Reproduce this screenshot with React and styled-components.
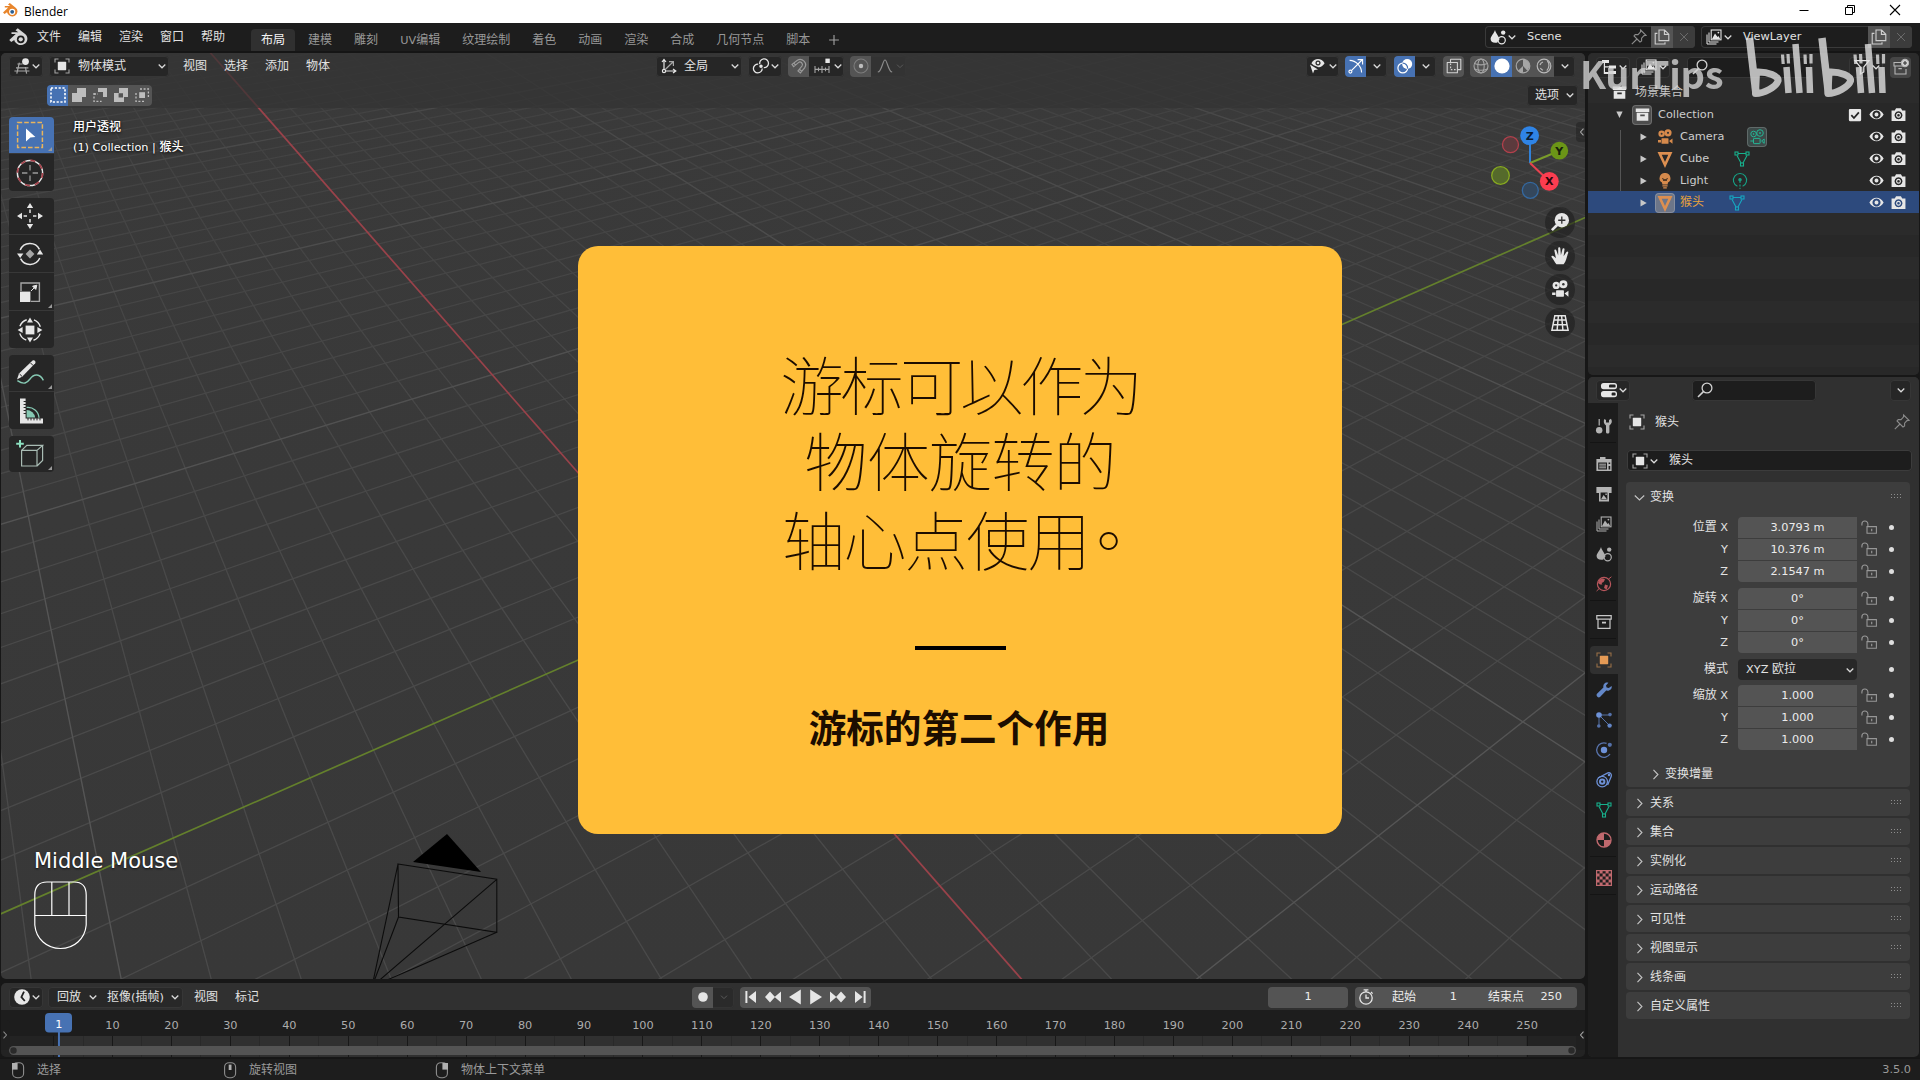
import React from "react";
import styled, { createGlobalStyle, css } from "styled-components";

const Global = createGlobalStyle`
  * { box-sizing: border-box; }
  body { margin: 0; background: #161616; overflow: hidden; }
`;

/* ---------- text ---------- */

const Cjk = styled.span`
  font-size: 12px;
`;
const T = ({ children }) =>
  String(children)
    .split(/([\u3000-\u9fff]+)/)
    .filter(Boolean)
    .map((part, i) => (/[\u3000-\u9fff]/.test(part) ? <Cjk key={i}>{part}</Cjk> : part));

const Label = styled.span`
  color: ${(p) => p.$color || "#e2e2e2"};
  white-space: pre;
  line-height: 18px;
  flex: none;
  ${(p) => p.$ml !== undefined && `margin-left: ${p.$ml}px;`}
  ${(p) => p.$w && `width: ${p.$w}px;`}
  ${(p) => p.$align && `text-align: ${p.$align};`}
  ${(p) => p.$shadow && "font-weight: 500; text-shadow: 0 1px 3px #000;"}
`;

/* ---------- icons ---------- */

const W = "#e6e6e6";
const G = "#a6a6a6";
const line = (c = W, w = 1.2) => ({ fill: "none", stroke: c, strokeWidth: w });

const movie = (c) => (
  <g fill={c}>
    <circle cx="4.6" cy="4.8" r="3.2" />
    <circle cx="11" cy="3.8" r="3.6" />
    <rect x="4.5" y="9.2" width="7" height="5.6" rx=".6" />
    <path d="M12 12 L15.5 9.6 V14.8 Z M1 11 H4 V13.4 H1Z" />
    <circle cx="4.6" cy="4.8" r="1" fill="#333" />
    <circle cx="11" cy="3.8" r="1.1" fill="#333" />
  </g>
);
const meshData = (c) => (
  <g {...line(c, 1.1)}>
    <path d="M4 2.5 H12 M3 4.5 L7 12 M13 4.5 L9 12" />
    <rect x="1" y="1" width="3" height="3" />
    <rect x="12" y="1" width="3" height="3" />
    <rect x="6.5" y="12" width="3" height="3" />
  </g>
);
const objectFrame = (c, f) => (
  <g>
    <path {...line(f, 1.1)} d="M1 4.5V1H4.5 M11.5 1H15V4.5 M15 11.5V15H11.5 M4.5 15H1V11.5" />
    <rect x="3.8" y="3.8" width="8.4" height="8.4" rx=".6" fill={c} />
  </g>
);
const layers = (c) => (
  <g>
    <path {...line(c, 1)} d="M1 5.5V15H10.5 M3 3.5V13H12.5" />
    <rect {...line(c, 1.1)} x="5.2" y="1" width="9.8" height="9.8" />
    <path fill={c} d="M6 10 L9 4.5 L11.5 8 L12.5 7 L14.2 10Z" />
    <circle cx="12.4" cy="3.6" r=".9" fill={c} />
  </g>
);
const sceneIcon = (c) => (
  <g>
    <path fill={c} d="M5 1 C6 5 9.5 8 9.5 10.5 A4 4 0 0 0 7.5 13.6 C3 14.6 .6 12.6 .6 10 C.6 7.4 4 4.5 5 1Z" />
    <circle cx="13.2" cy="3.6" r="2.2" fill={c} />
    <circle cx="11.7" cy="11.3" r="3.6" {...line(c, 1.2)} />
  </g>
);
const archive = (c) => (
  <g>
    <path fill={c} d="M.8 1.5 H15.2 V5.2 H.8Z" />
    <path fill={c} fillRule="evenodd" d="M1.8 6 H14.2 V14.6 H1.8Z M5.6 8 V9.8 H10.4 V8Z" />
  </g>
);
const pin = (c) => (
  <path {...line(c, 1.1)} d="M9.6 1 L15 6.4 L13 6.6 L10.6 9.2 L10.6 12 L9 13 L3 7 L4.2 5.6 L7 5.6 L9.4 3Z M6 10 L.8 15.2" />
);

const logoBody = "M6.2 5.6 L1 10.4 L2.6 12 L5 10.3 A5.3 5 0 1 0 13.4 5.4 L7.8 1 L6 2.6 L8.2 4.1 L2.8 4.1 L2.8 5.6Z";

const icons = {
  down: <path {...line("#d6d6d6", 1.7)} d="M3.6 6 L8 10.4 L12.4 6" />,
  downDim: <path {...line("#5a5a5a", 1.3)} d="M4 6.2 L8 10.2 L12 6.2" />,
  right: <path {...line("#c4c4c4", 1.4)} d="M5.5 2.2 L11 8 L5.5 13.8" />,
  open: <path {...line("#c4c4c4", 1.4)} d="M2.2 5.5 L8 11 L13.8 5.5" />,
  left: <path {...line("#a8a8a8", 1.4)} d="M10 3.5 L6 8 L10 12.5" />,
  rightDim: <path {...line("#8a8a8a", 1.4)} d="M6 3.5 L10 8 L6 12.5" />,
  logo: (
    <g>
      <path fill="#d6d6d6" d={logoBody} />
      <circle cx="10.2" cy="9.8" r="3.1" fill="#1d1d1d" />
      <circle cx="10.2" cy="9.8" r="1.7" fill="#d6d6d6" />
    </g>
  ),
  logoColor: (
    <g>
      <path fill="#e8852b" d={logoBody} />
      <circle cx="10.2" cy="9.8" r="3.1" fill="#fff" />
      <circle cx="10.2" cy="9.8" r="1.9" fill="#2b5f92" />
    </g>
  ),
  min: <path {...line("#000", 1)} d="M3.5 8.5H12.5" />,
  restore: <path {...line("#000", 1)} d="M3.5 5.5H10.5V12.5H3.5Z M5.5 5.5V3.5H12.5V10.5H10.5" />,
  close: <path {...line("#000", 1.1)} d="M3 3 L13 13 M13 3 L3 13" />,
  x: <path {...line("#6c6c6c", 1.1)} d="M3.5 3.5 L12.5 12.5 M12.5 3.5 L3.5 12.5" />,
  plus: <path {...line("#a0a0a0", 1.3)} d="M8 2.4V13.6 M2.4 8H13.6" />,
  editor3d: (
    <g>
      <path {...line(G, 1.2)} d="M3.4 6H8.6 M2 9.8H14.4 M.4 13H15.4 M5.4 4.6 L2.8 15.6 M11.4 9 L12.6 15.6" />
      <circle cx="11.5" cy="3.6" r="3.4" fill={W} />
    </g>
  ),
  object: objectFrame(W, G),
  objectOrange: objectFrame("#e49a55", "#9a7048"),
  orient: (
    <g {...line(W, 1.2)}>
      <path d="M3 12 V1.5 M1 4 L3 1.4 L5 4 M4.5 13 H14.5 M12 11 L14.8 13 L12 15" />
      <path stroke={G} d="M4.5 11.3 L12 4 M8 3.6H12.4V8" />
      <circle cx="3" cy="13" r="1.6" />
    </g>
  ),
  pivot: (
    <g {...line(W, 1.3)}>
      <path d="M9.2 10.4 A4.4 4.4 0 1 1 5.2 6.1" />
      <path d="M6.8 6.200 A4.400 4.400 0 1 1 10.800 9.700" />
      <circle cx="8" cy="8.2" r="1.1" fill={W} />
    </g>
  ),
  magnet: (
    <path {...line("#9a9a9a", 1.2)} d="M1 6.4 L6.4 2.2 C11 -.6 17 5 13.6 9.8 L9.4 15 L7 13 L11 8 C12.6 5.6 9.6 2.8 7.4 4.6 L2.6 8.6Z M2.8 5.2 L4.6 7.2 M8.4 11.2 L10.8 13.2" />
  ),
  snap: (
    <g>
      <path {...line(G, 1.1)} d="M1 11.4H15 M1 8V15 M4.5 9.6V13.2 M8 8V15 M11.5 9.6V13.2 M15 8V15" />
      <rect x="11.4" y=".6" width="4.4" height="4.4" fill={W} />
    </g>
  ),
  prop: (
    <g>
      <circle cx="8" cy="8" r="7" {...line("#7c7c7c", 1.1)} />
      <circle cx="8" cy="8" r="2.2" fill="#bdbdbd" />
    </g>
  ),
  curve: <path {...line("#8a8a8a", 1.2)} d="M.8 14 C5 13.6 5.6 2 8 2 C10.4 2 11 13.6 15.2 14" />,
  visibility: (
    <g>
      <path fill={W} d="M1 6.4 L9 11.4 L5.4 12 L4 15.4Z" />
      <path fill={W} fillRule="evenodd" d="M2.4 5.2 C5.6 -.4 12.4 -.4 15.6 5.2 C13.8 8 11.4 9.4 9.6 9.2 L4.6 7.2Z M9 2.4 A2.6 2.6 0 1 0 9.01 2.4Z" />
      <circle cx="9" cy="5" r="1.3" fill={W} />
    </g>
  ),
  gizmo: (
    <g {...line("#fff", 1.1)}>
      <path d="M3.4 12.6 L14 2 M9.6 1.6H14.6V6.4 M1.6 2.4 C8 2.6 13.4 8 13.6 14.4" />
      <circle cx="2.4" cy="13.6" r="1.5" />
    </g>
  ),
  overlay: (
    <g>
      <circle cx="10.2" cy="6" r="5" fill="#fff" />
      <circle cx="5.8" cy="10" r="4.9" {...line("#fff", 1.2)} />
      <path {...line("#4772b3", 1.2)} d="M5.6 5.2 A4.9 4.9 0 0 1 10.6 10.6" />
    </g>
  ),
  xray: (
    <g {...line("#d2d2d2", 1.1)} strokeLinejoin="round">
      <path d="M4.5 1.2H14.8V11.6H11.4 M4.5 1.2V4.5 M1.2 4.5H11.4V14.8H1.2Z" />
      <path strokeDasharray="1.6 1.6" d="M4.6 5.4V11.6H11" />
    </g>
  ),
  wire: (
    <g {...line(G, 1.1)}>
      <circle cx="8" cy="8" r="7" />
      <ellipse cx="8" cy="8" rx="3.2" ry="7" />
      <path d="M1.4 5.6 C5 7 11 7 14.6 5.6 M1.4 11 C5 12.4 11 12.4 14.6 11" />
    </g>
  ),
  solid: <circle cx="8" cy="8" r="7.6" fill="#fff" />,
  material: (
    <g>
      <circle cx="8" cy="8" r="6.8" {...line(G, 1.2)} />
      <path fill={G} d="M8 8V1.2A6.8 6.8 0 0 1 14.8 8L12.4 12.800Z M8 8L3 12.800A6.800 6.800 0 0 0 8 14.800Z" />
    </g>
  ),
  rendered: (
    <g {...line("#b8b8b8", 1.2)}>
      <circle cx="8" cy="8" r="6.8" />
      <path d="M11.4 3 C13.6 5.4 13.6 9.6 10.8 12.6 M4.4 10 A4.4 4.4 0 0 0 7 12.2 M4 7 A4 4 0 0 1 7 4" />
    </g>
  ),
  selSet: <rect x="1" y="1" width="14" height="14" fill="none" stroke="#fff" strokeWidth="1.6" strokeDasharray="2.2 1.6" />,
  selAdd: <path fill="#bdbdbd" d="M6 1H15V10H11V15H1V6H6Z" />,
  selSub: (
    <g>
      <path fill="#bdbdbd" d="M6 1H15V10H11V5H6Z" />
      <path {...line("#bdbdbd", 1.3)} strokeDasharray="2 1.6" d="M2 6V14.4H9.6 M2 7H6" />
    </g>
  ),
  selDiff: <path fill="#bdbdbd" fillRule="evenodd" d="M6 1H15V10H11V15H1V6H6Z M5.6 6.2V10.4H10V6.2Z" />,
  selAnd: (
    <g>
      <rect x="5.2" y="5.2" width="5.8" height="5.8" fill="#bdbdbd" />
      <path {...line("#bdbdbd", 1.3)} strokeDasharray="2 1.6" d="M6 2H14.4V10 M2 6V14.4H10" />
    </g>
  ),
  scene: sceneIcon(W),
  sceneDim: sceneIcon("#b0b0b0"),
  layers: layers(W),
  layersDim: layers("#b0b0b0"),
  pin: pin("#8a8a8a"),
  copy: (
    <g {...line("#cfcfcf", 1.1)}>
      <path d="M5 1H10.6L14.8 5.2V11.6H5Z M10.4 1V5.4H14.8" />
      <path d="M3.4 4.4H1.2V15H11V13.2" />
    </g>
  ),
  tree: <path fill={W} d="M1 1H8V4H4V7.2H8V6.4H15V9.4H8V8.4H4V13H8V12H15V15H2.8V4H1Z" />,
  search: (
    <g {...line("#d0d0d0", 1.3)}>
      <circle cx="10" cy="6" r="4.9" />
      <path d="M6.4 9.6 L1 15" strokeWidth="1.6" />
    </g>
  ),
  filter: <path {...line(W, 1.2)} d="M1 1.6H15L9.8 8V13L6.4 15V8Z" />,
  newCol: (
    <g {...line("#b5b5b5", 1.1)}>
      <path d="M8 3.5H1V7H11 M2 7V15H13V10 M5.4 9.6H8.8" />
      <circle cx="12" cy="4" r="3.6" fill="#d6d6d6" />
      <path stroke="#333" d="M12 2V6M10 4H14" />
    </g>
  ),
  archive: archive(W),
  archiveLine: (
    <g {...line("#c8c8c8", 1.2)}>
      <path d="M.8 1.6H15.2V5.2H.8Z M2 5.2V14.4H14V5.2" />
      <path strokeWidth="1.8" d="M6 8.6H10" />
    </g>
  ),
  eye: (
    <path fill={W} fillRule="evenodd" d="M.4 8 C3.6 1.2 12.4 1.2 15.6 8 C12.4 14.8 3.6 14.8 .4 8Z M8 3.7 A4.3 4.3 0 1 0 8.01 3.7Z M8 5.9 A2.1 2.1 0 1 1 7.99 5.9Z" />
  ),
  photo: (
    <path fill={W} fillRule="evenodd" d="M.6 3.6 H4 L5.4 1.2 H10.6 L12 3.6 H15.4 V14.8 H.6Z M8 4.6 A4.2 4.2 0 1 0 8.01 4.6Z M8 6.2 A2.6 2.6 0 1 1 7.99 6.2Z M8 7.4 A1.4 1.4 0 1 0 8.01 7.4Z" />
  ),
  check: (
    <g>
      <rect x="1" y="1" width="14" height="14" rx="1.2" fill={W} />
      <path {...line("#222", 2)} d="M3.8 8.2 L6.8 11.4 L12.4 5" />
    </g>
  ),
  tri: <path fill="#c8c8c8" d="M4 2.4 L14 8 L4 13.6Z" />,
  triDown: <path fill="#c8c8c8" d="M2.4 2.6 H13.6 L8 14Z" />,
  movie: movie(W),
  movieOrange: movie("#d68a4c"),
  movieGreen: (
    <g {...line("#25b494", 1)}>
      <circle cx="4.6" cy="5" r="2.8" />
      <circle cx="11" cy="4" r="3.3" />
      <rect x="4.5" y="9.4" width="6.6" height="5.2" rx=".6" />
      <path d="M12.600 12 L15.2 10 V14.400Z M4.400 12H1.400" />
      <circle cx="4.6" cy="5" r=".5" />
      <circle cx="11" cy="4" r=".6" />
    </g>
  ),
  mesh: <path fill="none" stroke="#dd8f50" strokeWidth="2.6" d="M2.6 2.4 H13.4 L8 14Z" />,
  meshData: meshData("#17b08c"),
  meshDataSel: meshData("#16a6c0"),
  light: (
    <g>
      <path fill="#d68a4c" d="M8 0 A5.2 5.2 0 0 1 11 9.6 L10.6 11.4 H5.4 L5 9.6 A5.2 5.2 0 0 1 8 0Z M5.4 12.2H10.6V13.4H5.4Z M6.2 14.2H9.8V15.6H6.2Z" />
      <path {...line("#3a2a1c", 1)} d="M5.6 5 L7 8 L8 6 L9 8 L10.4 5" />
    </g>
  ),
  lightData: (
    <g {...line("#17a085", 1.1)}>
      <path d="M5.4 13.2 A6.600 6.600 0 1 1 10.600 13.2" />
      <circle cx="8" cy="6.8" r="1.2" fill="#17a085" />
      <path strokeDasharray="2 1.4" d="M8 8V16" />
    </g>
  ),
  propsEditor: (
    <g fill={W}>
      <rect x="0" y="1" width="16" height="6.2" rx="2.6" />
      <rect x="0" y="9" width="16" height="6.2" rx="2.6" />
      <rect x="8" y="2.6" width="6.6" height="3" rx="1.2" fill="#222" />
      <rect x="10.6" y="10.6" width="4" height="3" rx="1.2" fill="#222" />
    </g>
  ),
  tool: (
    <g fill="#b4b4b4">
      <path d="M2.6 1H3.8V7.6H2.6Z" />
      <circle cx="3.2" cy="12.2" r="3.2" />
      <path d="M8.4 1 L10 2 V4.6 H13 V2 L15 .8 C16.6 3.4 16 5.6 13.4 7.4 V14 C13.4 16 10 16 10 14 V7.4 C7.4 5.6 7.4 3 8.4 1Z" />
    </g>
  ),
  renderTab: (
    <g>
      <path fill="#b4b4b4" fillRule="evenodd" d="M4 3 V1H9.5V3H15.6V15H.4V3Z M2.2 6.4H11V13.4H2.2Z M12.6 6.4V8H14.2V6.4Z M12.6 10V13.4H14.2V10Z" />
      <path {...line("#b4b4b4", 1)} d="M3.2 8.2H10 M3.2 10H10 M3.2 11.8H10" />
    </g>
  ),
  outputTab: (
    <g>
      <path fill="#b4b4b4" fillRule="evenodd" d="M.4 1H15.6V7H13V15.4H3V7H.4Z M4.6 6.4V13.6H11.4V6.4Z" />
      <path fill="#b4b4b4" d="M5.2 13 L7.6 9 L10.8 13Z M9.4 7.4H10.8V9H9.4Z" />
    </g>
  ),
  world: (
    <g>
      <circle cx="8" cy="8" r="6.6" {...line("#b8565c", 1.2)} />
      <path fill="#b8565c" d="M3 4 C5 2 8 2 9 3.4 L7.6 6 L5.6 7 L6.4 8.4 L4 8.6 L2 7Z M9 8.6 L12 9.6 L10.6 13.4 L8 12Z" />
      <path {...line("#b8565c", 1)} d="M.6 15 L3.4 12.4 M12.6 3 L15.4 .8" />
    </g>
  ),
  wrench: (
    <path fill="#6488c8" d="M15.600 4 L12.800 6 L10.600 5.500 L10 3.400 L12.400 .8 C9.600 -.2 6.800 2 7.400 5.600 L1 11.800 C-.4 13.600 2 16.400 4 15 L10.200 8.600 C14 9.400 16.400 6.600 15.600 4Z" />
  ),
  particles: (
    <g>
      <path {...line("#6487c8", 1)} d="M3 3H13 M3 3V13 M3 3L13 13" opacity=".8" />
      <circle cx="3" cy="3" r="2.8" fill="#6e92d8" />
      <circle cx="14" cy="2.6" r="1.8" fill="#5470a8" />
      <circle cx="2.8" cy="14" r="1.8" fill="#5470a8" />
      <circle cx="13.6" cy="13.6" r="2.2" fill="#6487c8" />
    </g>
  ),
  physics: (
    <g>
      <path {...line("#5873ac", 1.3)} d="M10.600 1.400 A7.200 7.200 0 1 0 14 12" />
      <circle cx="8" cy="8" r="3.2" fill="#6e92d8" />
      <circle cx="13.800" cy="2.800" r="2.100" fill="#5470a8" />
    </g>
  ),
  constraint: (
    <g {...line("#6e92d8", 1.3)}>
      <path d="M2 6 L11.8 .9 C14.4 .2 16 2.4 15.2 4.6 L11.6 13" />
      <circle cx="6.2" cy="9.6" r="5.3" />
      <circle cx="6.2" cy="9.6" r="2.2" strokeWidth="2" />
      <circle cx="13" cy="3" r=".6" />
    </g>
  ),
  materialTab: (
    <g>
      <circle cx="8" cy="8" r="7" {...line("#c0696e", 1.4)} />
      <path fill="#c0696e" d="M8 8V1A7 7 0 0 0 1 8Z M8 8V15A7 7 0 0 0 15 8Z" />
    </g>
  ),
  texture: (
    <g>
      <rect x=".6" y=".6" width="14.8" height="14.8" {...line("#c0696e", 1.2)} />
      <path fill="#c0696e" d="M3.6 .6h3v3h-3zM9.6 .6h3v3h-3zM.6 3.6h3v3h-3zM6.6 3.6h3v3h-3zM12.6 3.6h3v3h-3zM3.6 6.6h3v3h-3zM9.6 6.6h3v3h-3zM.6 9.6h3v3h-3zM6.6 9.6h3v3h-3zM12.6 9.6h3v3h-3zM3.6 12.6h3v3h-3zM9.6 12.6h3v3h-3z" />
    </g>
  ),
  lock: (
    <g {...line("#979797", 1.1)}>
      <path d="M6 6.6H15.4V13.2H6Z M.9 5.400V4 A3 3 0 0 1 6.9 4V6.6" />
      <path strokeWidth="1.2" d="M10.7 8.8V11.2" />
    </g>
  ),
  grip: (
    <g fill="#8d8d8d">
      {[0, 3, 6, 9].map((x) => [5, 8].map((y) => <rect key={x + "-" + y} x={3 + x} y={y} width="1" height="1" />))}
    </g>
  ),
  clock: (
    <g>
      <circle cx="8" cy="8" r="7.8" fill={W} />
      <path {...line("#222", 1.8)} d="M10 2.6 L7.4 8 L10.8 12" />
    </g>
  ),
  record: <circle cx="8" cy="8" r="4.8" fill={W} />,
  first: <path fill={W} d="M2.4 2H4.4V14H2.4Z M13 2V14L5.4 8Z" />,
  prevKey: <path fill={W} d="M5 2.4 L10 8 L5 13.6 L0 8Z M16 2.4V13.6L9.6 8Z" />,
  playBack: <path fill={W} d="M13.8 .4V15.6L2 8Z" />,
  play: <path fill={W} d="M2.2 .4V15.6L14 8Z" />,
  nextKey: <path fill={W} d="M11 2.4 L16 8 L11 13.6 L6 8Z M0 2.4V13.6L6.4 8Z" />,
  last: <path fill={W} d="M11.6 2H13.6V14H11.6Z M3 2V14L10.6 8Z" />,
  stopwatch: (
    <g {...line(W, 1.3)}>
      <circle cx="8" cy="9" r="6.2" />
      <path d="M5.6 .8H10.4 M8 .8V3 M13 3 L14.6 4.6 M8 5.6V9H11" />
    </g>
  ),
  mouseL: (
    <g>
      <rect x="2.6" y=".7" width="11" height="15" rx="4.4" {...line("#8f8f8f", 1.1)} />
      <path fill="#b0b0b0" d="M2 1H7.6V7.6H2Z" />
    </g>
  ),
  mouseM: (
    <g>
      <rect x="2.6" y=".7" width="11" height="15" rx="4.4" {...line("#8f8f8f", 1.1)} />
      <rect x="6.7" y="2.6" width="2.8" height="5.4" fill="#b0b0b0" />
    </g>
  ),
  mouseR: (
    <g>
      <rect x="2.4" y=".7" width="11" height="15" rx="4.4" {...line("#8f8f8f", 1.1)} />
      <path fill="#b0b0b0" d="M8.4 1H14V7.6H8.4Z" />
    </g>
  ),
  zoom: (
    <g>
      <circle cx="9.6" cy="6.4" r="6.4" fill={W} />
      <path {...line(W, 2.4)} d="M5.4 10.6 L.8 15.2" />
      <path {...line("#333", 1.2)} d="M9.6 3.2V9.6 M6.4 6.4H12.8" />
    </g>
  ),
  hand: (
    <path fill={W} d="M4.8 15.4 C3 13 2.2 10.6 .4 8.8 C.2 7.6 1.6 7.4 2.4 8.2 L4.4 10 L3 3.4 C2.8 2 4.4 1.8 4.8 3 L6.4 7.6 L6.4 1.2 C6.4 -.2 8.2 -.2 8.3 1.2 L8.8 7.4 L10.2 1.8 C10.6 .6 12.2 .9 12 2.2 L11.2 8.2 L13.6 4.6 C14.4 3.6 15.8 4.2 15.2 5.6 C13.8 9 13.6 12.6 11.2 15.4Z" />
  ),
  perspective: <path {...line(W, 1.3)} d="M3.4 1.6H12.6L15.2 14.4H.8Z M2.6 5.4H13.4 M1.8 9.6H14.2 M6.6 1.6L5.4 14.4 M9.4 1.6L10.6 14.4" />,
};

const Svg = styled.svg`
  display: block;
  flex: none;
  overflow: visible;
  ${(p) => p.$ml !== undefined && `margin-left: ${p.$ml}px;`}
`;
const Icon = ({ name, size = 16, ml }) => (
  <Svg width={size} height={size} viewBox="0 0 16 16" $ml={ml}>
    {icons[name]}
  </Svg>
);

/* ---------- generic widgets ---------- */

const Group = styled.div`
  display: flex;
  flex: none;
  height: ${(p) => p.$h || 21}px;
  width: ${(p) => (p.$w ? p.$w + "px" : "auto")};
  margin-left: ${(p) => p.$ml || 0}px;
  border-radius: 4px;
  overflow: hidden;
  background: ${(p) => p.$bg || "#262626"};
  box-shadow: inset 0 0 0 1px ${(p) => p.$edge || "#363636"};
`;
const tones = { dark: "transparent", blue: "#4772b3", grey: "#545454", dim: "#464646", soft: "#3c3c3c" };
const Cell = styled.div`
  display: flex;
  align-items: center;
  justify-content: ${(p) => p.$justify || "center"};
  width: ${(p) => (p.$w ? p.$w + "px" : "auto")};
  flex: ${(p) => (p.$w ? "none" : 1)};
  padding-left: ${(p) => p.$pl || 0}px;
  padding-right: ${(p) => p.$pr || 0}px;
  background: ${(p) => tones[p.$tone || "dark"]};
  & + & {
    border-left: ${(p) => (p.$seam ? "1px solid #3a3a3a" : "0")};
  }
`;
const Push = styled.div`
  flex: ${(p) => (p.$w ? "none" : 1)};
  width: ${(p) => p.$w || 0}px;
`;
const DropIcon = ({ name, pl = 5, gap = 0 }) => (
  <Cell $w={34} $justify="flex-start" $pl={pl}>
    <Icon name={name} />
    <Icon name="down" size={12} ml={gap} />
  </Cell>
);

const Screen = styled.div`
  width: 1920px;
  height: 1080px;
  display: flex;
  flex-direction: column;
  background: #171717;
  position: relative;
  overflow: hidden;
  font: 11.3px/18px "DejaVu Sans", "Noto Sans CJK SC", sans-serif;
  color: #e2e2e2;
`;

/* ---------- window title ---------- */

const TitleBar = styled.div`
  height: 23px;
  flex: none;
  display: flex;
  align-items: center;
  background: #fff;
  padding: 0 17px 3px 2px;
`;
const WindowTitle = styled.span`
  font: 12px/20px "Open Sans", "Noto Sans", sans-serif;
  color: #000;
  margin: 3px 0 0 6px;
  flex: 1;
`;
const WindowButtons = styled.div`
  display: flex;
  gap: 29.500px;
`;

/* ---------- top bar ---------- */

const TopBar = styled.div`
  height: 30px;
  flex: none;
  display: flex;
  background: #1d1d1d;
  padding: 0 8px 0 8px;
  border-bottom: 2px solid #151515;
`;
const MenuRow = styled.div`
  display: flex;
  align-items: center;
  gap: ${(p) => p.$gap || 17}px;
  margin-left: ${(p) => p.$ml || 0}px;
  height: 28px;
`;
const Tabs = styled.div`
  display: flex;
  align-items: flex-end;
  margin-left: 26px;
`;
const Tab = styled.div`
  height: 22px;
  padding: 0 ${(p) => (p.$active ? 10 : 11)}px;
  margin-right: ${(p) => (p.$active ? 2 : 0)}px;
  display: flex;
  align-items: center;
  border-radius: 4px 4px 0 0;
  background: ${(p) => (p.$active ? "#303030" : "transparent")};
`;
const TopRight = styled.div`
  margin-left: auto;
  display: flex;
  gap: 6px;
  padding-top: 3px;
`;

const workspaces = ["布局", "建模", "雕刻", "UV编辑", "纹理绘制", "着色", "动画", "渲染", "合成", "几何节点", "脚本"];

const TopBarView = () => (
  <TopBar>
    <MenuRow $gap={9}>
      <Icon name="logo" size={20} />
      <MenuRow>
        {["文件", "编辑", "渲染", "窗口", "帮助"].map((m) => (
          <Label key={m}><T>{m}</T></Label>
        ))}
      </MenuRow>
    </MenuRow>
    <Tabs>
      {workspaces.map((w, i) => (
        <Tab key={w} $active={i === 0}>
          <Label $color={i === 0 ? "#f4f4f4" : "#989898"}><T>{w}</T></Label>
        </Tab>
      ))}
      <Tab><Icon name="plus" size={14} ml={-5} /></Tab>
    </Tabs>
    <TopRight>
      <Group $w={210} $h={22} $bg="#1d1d1d" $edge="#3a3a3a">
        <DropIcon name="scene" />
        <Cell $seam $justify="flex-start" $pl={8} $pr={4}>
          <Label>Scene</Label><Push /><Icon name="pin" />
        </Cell>
        <Cell $w={22} $tone="grey"><Icon name="copy" /></Cell>
        <Cell $w={22} $tone="soft"><Icon name="x" size={14} /></Cell>
      </Group>
      <Group $w={211} $h={22} $bg="#1d1d1d" $edge="#3a3a3a">
        <DropIcon name="layers" />
        <Cell $seam $justify="flex-start" $pl={8}><Label>ViewLayer</Label></Cell>
        <Cell $w={22} $tone="grey"><Icon name="copy" /></Cell>
        <Cell $w={22} $tone="soft"><Icon name="x" size={14} /></Cell>
      </Group>
    </TopRight>
  </TopBar>
);

/* ---------- workspace frame ---------- */

const Workspace = styled.div`
  display: flex;
  height: 1005px;
  flex: none;
  gap: 3px;
  padding: 0 1px;
`;
const Column = styled.div`
  display: flex;
  flex-direction: column;
  width: ${(p) => p.$w}px;
  flex: none;
  gap: ${(p) => p.$gap}px;
`;
const area = css`
  border-radius: 5px;
  overflow: hidden;
  flex: none;
`;

/* ---------- 3D viewport ---------- */

const Viewport = styled.div`
  ${area}
  height: 926px;
  position: relative;
  background: linear-gradient(#3a3a3a, #383838);
  display: flex;
  flex-direction: column;
`;
const Canvas = styled.svg`
  position: absolute;
  inset: 0;
`;
const ViewHeader = styled.div`
  position: relative;
  flex: none;
  height: ${(p) => p.$h}px;
  display: flex;
  align-items: center;
  background: rgba(51, 51, 51, 0.72);
  padding: ${(p) => p.$pad};
`;

/* Orbit camera looking at the ground plane; heading and pitch in degrees. */
const camera = { focal: 1100, heading: 56.19, pitch: 38.37, cx: 792, cy: 463, ox: -1.785, oy: -1.705, depth: 20.37 };
const rad = Math.PI / 180;
const ca = Math.cos(camera.heading * rad);
const sa = Math.sin(camera.heading * rad);
const ce = Math.cos(camera.pitch * rad);
const se = Math.sin(camera.pitch * rad);

const toView = (x, y) => [
  camera.ox + x * ca + y * sa,
  camera.oy - x * sa * se + y * ca * se,
  camera.depth - x * sa * ce + y * ca * ce,
];
const project = ([x, y, z]) => [
  (camera.cx + (camera.focal * x) / z).toFixed(1),
  (camera.cy - (camera.focal * y) / z).toFixed(1),
];
const segment = (from, to) => {
  let a = toView(...from);
  let b = toView(...to);
  const near = 4;
  if (a[2] < near && b[2] < near) return null;
  const cut = (p, q) => {
    const t = (near - p[2]) / (q[2] - p[2]);
    return p.map((v, i) => v + (q[i] - v) * t);
  };
  if (a[2] < near) a = cut(a, b);
  if (b[2] < near) b = cut(b, a);
  const [x1, y1] = project(a);
  const [x2, y2] = project(b);
  return { x1, y1, x2, y2 };
};
const reach = 90;
const gridLines = [];
for (let i = -reach; i <= reach; i += 1) {
  if (i !== 0) {
    const s = i % 10 === 0;
    gridLines.push({ key: "x" + i, strong: s, ...segment([i, -reach], [i, reach]) });
    gridLines.push({ key: "y" + i, strong: s, ...segment([-reach, i], [reach, i]) });
  }
}
gridLines.sort((a, b) => a.strong - b.strong);

const Scene3D = () => (
  <Canvas width="1584" height="926" viewBox="0 0 1584 926">
    <defs>
      <linearGradient id="fade" x1="0" y1="0" x2="0" y2="1">
        <stop offset="0" stopColor="#fff" stopOpacity=".25" />
        <stop offset=".06" stopColor="#fff" stopOpacity=".55" />
        <stop offset=".3" stopColor="#fff" stopOpacity=".8" />
        <stop offset=".6" stopColor="#fff" stopOpacity="1" />
      </linearGradient>
      <mask id="far"><rect width="1584" height="926" fill="url(#fade)" /></mask>
    </defs>
    <g mask="url(#far)">
      {gridLines.filter((l) => l.x1 !== undefined).map(({ key, strong, ...l }) => (
        <line key={key} {...l} stroke={strong ? "#555555" : "#4a4a4a"} strokeWidth={strong ? 1.4 : 1.3} />
      ))}
    </g>
    <line {...segment([-reach, 0], [reach, 0])} stroke="#99424a" strokeWidth="1.7" />
    <line {...segment([0, -reach], [0, reach])} stroke="#64802c" strokeWidth="1.7" />
    <path d="M446 781 L412 809 L480 819Z" fill="#000" />
    <path fill="none" stroke="#0c0c0c" strokeWidth="1.1" d="M397 811 L495.8 826.3 V879.3 L397.5 864Z M397 811 L371 933.6 L397.5 864 M495.8 826.3 L371 933.6 L495.8 879.3" />
  </Canvas>
);

const ViewBody = styled.div`
  position: relative;
  display: flex;
  flex: 1;
  padding: 9px 0 0 8px;
`;
const Toolbar = styled.div`
  display: flex;
  flex-direction: column;
  gap: 7px;
  width: 45px;
`;
const ToolSet = styled.div`
  display: flex;
  flex-direction: column;
  gap: 1px;
  border-radius: 4px;
  overflow: hidden;
  background: #383838;
`;
const ToolButton = styled.div`
  height: ${(p) => p.$h || 37}px;
  display: flex;
  align-items: center;
  justify-content: center;
  position: relative;
  padding-right: 3px;
  background: ${(p) => (p.$on ? "#4772b3" : "#262626")};
  ${(p) =>
    p.$more &&
    `&::after { content: ""; position: absolute; right: 2px; bottom: 2px; border: 2px solid transparent; border-right-color: #9a9a9a; border-bottom-color: #9a9a9a; }`}
`;
const toolArt = {
  select: (
    <g>
      <rect x="1.6" y="1.6" width="24.8" height="24.8" fill="none" stroke="#e9b45c" strokeWidth="1.5" strokeDasharray="4.6 2" />
      <path fill="#fff" d="M10 7.6 L19.4 16 L14.4 16.6 L10 20.4Z" />
    </g>
  ),
  cursor: (
    <g fill="none">
      <circle cx="14" cy="14" r="12.6" stroke="#e8e8e8" strokeWidth="1.5" />
      <circle cx="14" cy="14" r="12.6" stroke="#a8434c" strokeWidth="1.7" strokeDasharray="4.95 4.95" />
      <path stroke="#9a9a9a" strokeWidth="1.3" d="M14 6V11.4 M14 16.6V22 M6 14H11.4 M16.6 14H22" />
    </g>
  ),
  move: (
    <g fill={W}>
      <path d="M14 1 L17.2 6 H10.8Z M14 27 L17.2 22 H10.8Z M1 14 L6 10.8 V17.2Z M27 14 L22 10.8 V17.2Z" />
      <path stroke={W} strokeWidth="1.5" d="M14 7.6V11 M14 17V20.4 M7.6 14H11 M17 14H20.4" />
    </g>
  ),
  rotate: (
    <g>
      <path fill="none" stroke={W} strokeWidth="1.5" d="M4.2 10 A10.6 10.6 0 0 1 23.4 9.4 M23.8 18 A10.6 10.6 0 0 1 4.6 18.6" />
      <path fill={W} d="M1 13.4H7.4L4.2 18Z M20.8 14.6H27.2L24 9.6Z" />
      <path fill="#a6a6a6" d="M14 9.6 L18.4 14 L14 18.4 L9.6 14Z" />
    </g>
  ),
  scale: (
    <g>
      <path fill="none" stroke="#a6a6a6" strokeWidth="1.4" d="M5 13V5H23.4V23.4H15" />
      <rect x="4" y="13.6" width="10.4" height="10.4" fill={W} />
      <path fill={W} stroke={W} d="M15 13 L18.4 9.6 M20.8 7.2 L16.6 8.2 L19.8 11.4Z" />
    </g>
  ),
  transform: (
    <g>
      <circle cx="14" cy="14" r="10.8" fill="none" stroke={W} strokeWidth="1.4" strokeDasharray="9.6 7.36" strokeDashoffset="-3.7" />
      <rect x="9.6" y="9.6" width="8.8" height="8.8" fill={W} />
      <path fill={W} d="M14 1.6 L17 6.6 H11Z M14 26.4 L17 21.4 H11Z M1.6 14 L6.6 11 V17Z M26.4 14 L21.4 11 V17Z" />
    </g>
  ),
  annotate: (
    <g>
      <path fill={W} d="M16.6 1.6 C18.2 .4 20.4 2.6 19.2 4.2 L6.4 17.4 L1 20.6 L3 14.6Z" />
      <path stroke="#262626" d="M14.6 4 L17.2 6.6 M3.6 15 L6 17.4" />
      <path fill="none" stroke="#86c9b3" strokeWidth="1.4" d="M1.4 21.6 C8 26 11 24 14 20 C18 14.4 24 14.6 27.4 21.4" />
    </g>
  ),
  measure: (
    <g>
      <path fill={W} d="M4 1.600H9.600V21.600H27V26.600H4Z" />
      <path fill="#86c9b3" d="M10.600 20.600 V13 A8.600 8.600 0 0 1 19.200 20.600Z" />
      <path fill="none" stroke="#86c9b3" strokeWidth="1.3" d="M10.600 10.400 A11 11 0 0 1 23 20.800" />
      <path stroke="#262626" d="M7.6 4.5H10 M7.6 7.5H10 M7.6 10.5H10 M7.6 13.5H10 M7.6 16.5H10 M12 21V23.4 M15 21V23.4 M18 21V23.4 M21 21V23.4 M24 21V23.4" />
    </g>
  ),
  add: (
    <g fill="none" stroke="#a9bcb4" strokeWidth="1.2">
      <path d="M5.6 10.4H21V26H5.6Z M5.6 10.4 L10.8 5.4H26.6L21 10.4 M26.6 5.4V20.4L21 26" />
      <path stroke="#8ce0c0" strokeWidth="2" d="M4 0V7.6 M.2 3.8H7.8" />
    </g>
  ),
};
const Tool = ({ art, ...rest }) => (
  <ToolButton {...rest}>
    <svg width="28" height="28" viewBox="0 0 28 28">{toolArt[art]}</svg>
  </ToolButton>
);

const ViewInfo = styled.div`
  margin: 1px 0 0 19px;
  display: flex;
  flex-direction: column;
  gap: 1px;
`;
const KeyOverlay = styled.div`
  position: absolute;
  left: 33px;
  bottom: 29px;
  display: flex;
  flex-direction: column;
  gap: 6px;
`;
const KeyText = styled.div`
  font-size: 21px;
  line-height: 28px;
  color: #fff;
  text-shadow: 0 1px 2px #111;
`;
const NavStack = styled.div`
  position: absolute;
  right: 10px;
  top: 154px;
  display: flex;
  flex-direction: column;
  gap: 3px;
`;
const NavButton = styled.div`
  width: 30px;
  height: 30.5px;
  border-radius: 50%;
  background: rgba(28, 28, 28, 0.55);
  display: flex;
  align-items: center;
  justify-content: center;
`;
const AxisGizmo = styled.svg`
  position: absolute;
  left: 1484px;
  top: 68px;
  font: bold 11px "DejaVu Sans", sans-serif;
`;
const EdgeToggle = styled.div`
  position: absolute;
  ${(p) => (p.$left ? "left: -2px" : "right: -2px")};
  top: ${(p) => p.$top}px;
  width: 11px;
  height: ${(p) => p.$h || 20}px;
  border-radius: 4px;
  background: rgba(30, 30, 30, 0.5);
  display: flex;
  align-items: center;
  justify-content: center;
`;

const Axes = () => (
  <AxisGizmo width="96" height="84" viewBox="1485 121 96 84" textAnchor="middle">
    <circle cx="1510.5" cy="144.7" r="8" fill="#5c3a3d" stroke="#b3404c" strokeWidth="1.3" />
    <circle cx="1530.3" cy="190.3" r="8" fill="#34475c" stroke="#34689f" strokeWidth="1.3" />
    <circle cx="1500.5" cy="175.5" r="8.8" fill="#556a2b" stroke="#88aa20" strokeWidth="1.3" />
    <path stroke="#3181d8" strokeWidth="2" d="M1530 163V140" />
    <path stroke="#7a9c2a" strokeWidth="2" d="M1530 163L1559 151" />
    <path stroke="#e8424f" strokeWidth="2" d="M1530 163L1549 181" />
    <circle cx="1529.6" cy="135.7" r="9.4" fill="#2f84e6" />
    <circle cx="1559.3" cy="150.7" r="8.9" fill="#6b9517" />
    <circle cx="1549.3" cy="181.3" r="9.4" fill="#fb3d50" />
    <text x="1529.8" y="139.8" fill="#0b1d33">Z</text>
    <text x="1559.3" y="154.8" fill="#16200a">Y</text>
    <text x="1549.3" y="185.4" fill="#2d070b">X</text>
  </AxisGizmo>
);

const Card = styled.div`
  position: absolute;
  left: 577px;
  top: 193px;
  width: 764px;
  height: 588px;
  border-radius: 20px;
  background: #ffbe38;
  display: flex;
  flex-direction: column;
  align-items: center;
  color: #1c0d00;
`;
const CardLines = styled.div`
  margin-top: 98px;
  font-family: "Noto Sans CJK TC", "Noto Sans CJK SC", sans-serif;
  font-weight: 100;
  font-size: 63.5px;
  text-align: center;
`;
const CardLine = styled.div`
  height: ${(p) => p.$h}px;
  line-height: 76px;
  letter-spacing: ${(p) => p.$ls}px;
  white-space: nowrap;
`;
const FullStop = styled.span`
  margin-left: -12px;
`;
const CardRule = styled.div`
  width: 91px;
  height: 4px;
  background: #000;
  margin-top: 71px;
`;
const CardTitle = styled.div`
  margin: 48px 2px 0 0;
  font: bold 37.6px/56px "Noto Sans CJK SC", sans-serif;
`;

const ViewportView = () => (
  <Viewport>
    <Scene3D />
    <ViewHeader $h={26} $pad="0 10px 0 8px">
      <Group $w={34}><DropIcon name="editor3d" /></Group>
      <Group $w={120} $ml={6}>
        <Cell $justify="flex-start" $pl={5} $pr={1}>
          <Icon name="object" /><Label $ml={8}><T>物体模式</T></Label><Push /><Icon name="down" size={12} />
        </Cell>
      </Group>
      <MenuRow $ml={14}>
        {["视图", "选择", "添加", "物体"].map((m) => <Label key={m}><T>{m}</T></Label>)}
      </MenuRow>
      <Push $w={326} />
      <Group $w={86}>
        <Cell $justify="flex-start" $pl={5} $pr={1}>
          <Icon name="orient" /><Label $ml={7}><T>全局</T></Label><Push /><Icon name="down" size={12} />
        </Cell>
      </Group>
      <Group $w={34} $ml={6}><DropIcon name="pivot" /></Group>
      <Group $w={56} $ml={6}>
        <Cell $w={21} $tone="grey"><Icon name="magnet" /></Cell>
        <Cell $justify="flex-start" $pl={5}><Icon name="snap" /><Icon name="down" size={12} ml={2} /></Cell>
      </Group>
      <Group $w={56} $ml={6} $bg="#333">
        <Cell $w={21} $tone="grey"><Icon name="prop" /></Cell>
        <Cell $justify="flex-start" $pl={6}><Icon name="curve" /><Icon name="downDim" size={12} ml={1} /></Cell>
      </Group>
      <Push />
      <Group $w={33}><DropIcon name="visibility" pl={3} gap={2} /></Group>
      <Group $w={42} $ml={6}>
        <Cell $w={21} $tone="blue"><Icon name="gizmo" /></Cell><Cell><Icon name="down" size={12} /></Cell>
      </Group>
      <Group $w={42} $ml={7}>
        <Cell $w={21} $tone="blue"><Icon name="overlay" /></Cell><Cell><Icon name="down" size={12} /></Cell>
      </Group>
      <Group $w={21} $ml={7}><Cell $tone="grey"><Icon name="xray" /></Cell></Group>
      <Group $w={105} $ml={6}>
        <Cell $w={21} $tone="grey"><Icon name="wire" /></Cell>
        <Cell $w={21} $tone="blue"><Icon name="solid" /></Cell>
        <Cell $w={21} $tone="grey"><Icon name="material" /></Cell>
        <Cell $w={21} $tone="grey"><Icon name="rendered" /></Cell>
        <Cell><Icon name="down" size={12} /></Cell>
      </Group>
    </ViewHeader>
    <ViewHeader $h={29} $pad="3px 7px 0 46px">
      <Group $w={105}>
        <Cell $w={21} $tone="blue"><Icon name="selSet" /></Cell>
        {["selAdd", "selSub", "selDiff", "selAnd"].map((n) => (
          <Cell key={n} $w={21} $tone="grey" $seam><Icon name={n} /></Cell>
        ))}
      </Group>
      <Push />
      <Group $w={51}><Cell $justify="flex-start" $pl={8}><Label><T>选项</T></Label><Icon name="down" size={12} ml={5} /></Cell></Group>
    </ViewHeader>
    <ViewBody>
      <Toolbar>
        <ToolSet><Tool art="select" $on $more $h={36} /><Tool art="cursor" /></ToolSet>
        <ToolSet><Tool art="move" $h={36} /><Tool art="rotate" /><Tool art="scale" $more /><Tool art="transform" /></ToolSet>
        <ToolSet><Tool art="annotate" $more $h={36} /><Tool art="measure" /></ToolSet>
        <ToolSet><Tool art="add" $more $h={36} /></ToolSet>
      </Toolbar>
      <ViewInfo>
        <Label $color="#fff" $shadow><T>用户透视</T></Label>
        <Label $color="#fff" $shadow><T>(1) Collection | 猴头</T></Label>
      </ViewInfo>
    </ViewBody>
    <Axes />
    <EdgeToggle $top={69}><Icon name="left" size={12} /></EdgeToggle>
    <NavStack>
      {["zoom", "hand", "movie", "perspective"].map((n) => (
        <NavButton key={n}><Icon name={n} size={18} /></NavButton>
      ))}
    </NavStack>
    <KeyOverlay>
      <KeyText>Middle Mouse</KeyText>
      <svg width="53" height="69" viewBox="0 0 53 69" fill="none" stroke="#fff" strokeWidth="1.2">
        <path d="M.8 14 C.8 6 4.5 1 13 1 H40 C48.500 1 52.200 6 52.200 14 V44 C51 58 40 67.500 26.500 67.500 C13 67.500 2 58 .8 44Z M.8 34.500H52.200 M17.800 1V34.500 M35 1V34.500" />
      </svg>
    </KeyOverlay>
    <Card>
      <CardLines>
        <CardLine $h={76} $ls={-3.6}>游标可以作为</CardLine>
        <CardLine $h={79} $ls={-1.2}>物体旋转的</CardLine>
        <CardLine $h={76} $ls={-2.1}>轴心点使用<FullStop>。</FullStop></CardLine>
      </CardLines>
      <CardRule />
      <CardTitle>游标的第二个作用</CardTitle>
    </Card>
  </Viewport>
);

/* ---------- timeline ---------- */

const Timeline = styled.div`
  ${area}
  height: 74px;
  position: relative;
  background: #1d1d1d;
`;
const TimelineHeader = styled.div`
  height: 27px;
  display: flex;
  align-items: center;
  background: #303030;
  padding: 1px 8px 0 8px;
`;
const Ruler = styled.svg`
  display: block;
  font: 11.3px "DejaVu Sans", sans-serif;
`;
const frameX = (f) => 111 + (f - 10) * 5.894;

const TimelineView = () => (
  <Timeline>
    <TimelineHeader>
      <Group $w={34}><DropIcon name="clock" /></Group>
      <Group $w={135} $ml={5} $bg="#282828">
        <Cell $w={51} $justify="flex-start" $pl={9}><Label><T>回放</T></Label><Icon name="down" size={12} ml={6} /></Cell>
        <Cell $seam $justify="flex-start" $pl={8}><Label><T>抠像(插帧)</T></Label><Icon name="down" size={12} ml={5} /></Cell>
      </Group>
      <MenuRow $ml={11}><Label><T>视图</T></Label><Label><T>标记</T></Label></MenuRow>
      <Push />
      <Group $w={42} $bg="#2a2a2a" $edge="#333"><Cell $w={21} $tone="grey"><Icon name="record" /></Cell><Cell><Icon name="downDim" size={12} /></Cell></Group>
      <Group $w={131} $ml={6}>
        {["first", "prevKey", "playBack", "play", "nextKey", "last"].map((n) => (
          <Cell key={n} $tone="grey" $seam><Icon name={n} /></Cell>
        ))}
      </Group>
      <Push $w={397} />
      <Group $w={80}><Cell $tone="grey"><Label $color="#ececec">1</Label></Cell></Group>
      <Group $w={222} $ml={7}>
        <Cell $w={21} $tone="grey"><Icon name="stopwatch" /></Cell>
        <Cell $w={96} $tone="grey" $seam $justify="flex-start" $pl={16} $pr={15}><Label $color="#ececec"><T>起始</T></Label><Push /><Label $color="#ececec">1</Label></Cell>
        <Cell $tone="grey" $seam $justify="flex-start" $pl={16} $pr={15}><Label $color="#ececec"><T>结束点</T></Label><Push /><Label $color="#ececec">250</Label></Cell>
      </Group>
    </TimelineHeader>
    <Ruler width="1584" height="47" viewBox="0 0 1584 47" textAnchor="middle">
      <rect x="0" y="26" width="1584" height="21" fill="#232323" />
      <rect x={frameX(1)} y="26" width={frameX(250) - frameX(1)} height="21" fill="#303030" />
      {Array.from({ length: 51 }, (_, i) => i * 5).map((f) => (
        <path key={f} stroke={f % 10 ? "#292929" : "#181818"} strokeWidth="1" d={`M${Math.round(frameX(f)) + 0.5} 26V47`} />
      ))}
      {Array.from({ length: 25 }, (_, i) => (i + 1) * 10).map((f) => (
        <text key={f} x={frameX(f) + 0.5} y="18.5" fill="#acacac">{f}</text>
      ))}
      <path stroke="#4772b3" strokeWidth="2" d={`M${frameX(1)} 20V47`} />
      <rect x="8" y="36" width="1567" height="9" rx="4.5" fill="#545454" />
      <circle cx="12.5" cy="40.5" r="3.2" fill="#2a2a2a" />
      <circle cx="1570.5" cy="40.5" r="3.2" fill="#2a2a2a" />
      <rect x="44" y="3" width="27" height="19.5" rx="4" fill="#4772b3" />
      <text x={frameX(1)} y="18" fill="#fff">1</text>
    </Ruler>
    <EdgeToggle $left $top={37} $h={30}><Icon name="rightDim" size={12} /></EdgeToggle>
    <EdgeToggle $top={37} $h={30}><Icon name="left" size={12} /></EdgeToggle>
  </Timeline>
);

/* ---------- outliner ---------- */

const Outliner = styled.div`
  ${area}
  height: 322px;
  background: #282828;
`;
const AreaHeader = styled.div`
  height: ${(p) => p.$h || 28}px;
  display: flex;
  align-items: center;
  background: ${(p) => p.$bg || "#2b2b2b"};
  padding: ${(p) => p.$pad || "0 8px"};
`;
const Row = styled.div`
  height: 22px;
  display: flex;
  align-items: center;
  padding: 1px 13px 0 ${(p) => p.$pl || 24}px;
  background: ${(p) => (p.$odd ? "#2b2b2b" : "#282828")};
`;
const Branch = styled.div`
  background: linear-gradient(#555, #555) 32px 5px / 1px 78px no-repeat;
`;
const BranchRow = styled(Row)`
  background: ${(p) => (p.$sel ? "#2d4a7d" : "transparent")};
`;
const Bubble = styled.div`
  width: 20px;
  height: 20px;
  border-radius: 4px;
  display: flex;
  align-items: center;
  justify-content: center;
  flex: none;
  margin-left: ${(p) => p.$ml || 0}px;
  background: ${(p) => p.$bg || "transparent"};
  box-shadow: ${(p) => (p.$bg ? "inset 0 0 0 1px rgba(255,255,255,.18)" : "none")};
`;
const Toggles = styled.div`
  margin-left: auto;
  display: flex;
  align-items: center;
  gap: 7px;
`;

const objects = [
  { name: "Camera", icon: "movieOrange", data: "movieGreen", gap: 23, bubble: "#3d4a49" },
  { name: "Cube", icon: "mesh", data: "meshData", gap: 23 },
  { name: "Light", icon: "light", data: "lightData", gap: 22 },
  { name: "猴头", icon: "mesh", data: "meshDataSel", gap: 23, sel: true },
];

const OutlinerView = () => (
  <Outliner>
    <AreaHeader $h={28}>
      <Group $w={34}><DropIcon name="tree" /></Group>
      <Group $w={34} $ml={6}><DropIcon name="layers" /></Group>
      <Group $w={124} $ml={17} $bg="#1d1d1d"><Cell $justify="flex-start" $pl={5}><Icon name="search" /></Cell></Group>
      <Push />
      <Group $w={34}><DropIcon name="filter" /></Group>
      <Group $w={21} $ml={7}><Cell $tone="dim"><Icon name="newCol" /></Cell></Group>
    </AreaHeader>
    <Row $pl={24} $odd><Icon name="archive" size={15} /><Label $ml={8} $color="#c8c8c8"><T>场景集合</T></Label></Row>
    <Row $pl={27}>
      <Icon name="triDown" size={9} />
      <Bubble $ml={8} $bg="#4e4e4e"><Icon name="archive" size={15} /></Bubble>
      <Label $ml={6} $color="#cccccc">Collection</Label>
      <Toggles><Icon name="check" size={14} /><Icon name="eye" size={15} /><Icon name="photo" size={15} /></Toggles>
    </Row>
    <Branch>
      {objects.map((o) => (
        <BranchRow key={o.name} $pl={50} $sel={o.sel}>
          <Icon name="tri" size={10} />
          <Bubble $ml={7} $bg={o.sel ? "#6d7689" : undefined}><Icon name={o.icon} /></Bubble>
          <Label $ml={5} $color={o.sel ? "#e8a33c" : "#cccccc"}><T>{o.name}</T></Label>
          <Bubble $ml={o.gap} $bg={o.bubble}><Icon name={o.data} /></Bubble>
          <Toggles><Icon name="eye" size={15} /><Icon name="photo" size={15} /></Toggles>
        </BranchRow>
      ))}
    </Branch>
    {Array.from({ length: 8 }, (_, i) => <Row key={i} $odd={i % 2 === 0} />)}
  </Outliner>
);

/* ---------- properties ---------- */

const Properties = styled.div`
  ${area}
  height: 680px;
  background: #303030;
  display: flex;
  flex-direction: column;
`;
const PropsBody = styled.div`
  display: flex;
  flex: 1;
`;
const TabStrip = styled.div`
  width: 30px;
  flex: none;
  background: #1d1d1d;
  display: flex;
  flex-direction: column;
  padding: 9px 0 0 2px;
`;
const PropTab = styled.div`
  height: 28px;
  margin-bottom: 2px;
  padding-left: 6px;
  display: flex;
  align-items: center;
  border-radius: 4px 0 0 4px;
  background: ${(p) => (p.$on ? "#303030" : "transparent")};
`;
const TabGap = styled.div`
  height: 8px;
  width: 26px;
  border-top: 1px solid #141414;
`;
const Content = styled.div`
  flex: 1;
  padding: 0 8px;
  display: flex;
  flex-direction: column;
`;
const Crumb = styled.div`
  display: flex;
  align-items: center;
  height: 38px;
  margin-bottom: 9px;
  padding: 0 2px 0 3px;
`;
const Panel = styled.div`
  width: 284px;
  border-radius: 4px;
  background: #3d3d3d;
  margin-top: ${(p) => p.$mt || 2}px;
  height: ${(p) => p.$h || 27}px;
  flex: none;
`;
const PanelHead = styled.div`
  height: ${(p) => p.$h || 27}px;
  display: flex;
  align-items: center;
  padding: 1px 6px 0 ${(p) => p.$pl || 7}px;
`;
const FieldBlock = styled.div`
  display: flex;
  flex-direction: column;
  gap: 1px;
  margin-top: ${(p) => p.$mt}px;
`;
const FieldRow = styled.div`
  height: 21px;
  display: flex;
  align-items: center;
`;
const Value = styled.div`
  width: 119px;
  height: 21px;
  margin-left: 10px;
  display: flex;
  align-items: center;
  justify-content: ${(p) => (p.$menu ? "space-between" : "center")};
  padding: ${(p) => (p.$menu ? "0 1px 0 8px" : 0)};
  background: ${(p) => (p.$menu ? "#282828" : "#545454")};
  border-radius: ${(p) => p.$r || "0"};
`;
const Dot = styled.div`
  width: 5px;
  height: 5px;
  border-radius: 50%;
  background: #dedede;
  margin-left: auto;
  margin-right: 16px;
`;

const XYZ = ({ title, values, mt }) => (
  <FieldBlock $mt={mt}>
    {values.map((v, i) => (
      <FieldRow key={i}>
        <Label $w={102} $align="right"><T>{(i === 0 ? title + " " : "") + "XYZ"[i]}</T></Label>
        <Value $r={["4px 0 0 0", "0", "0 0 0 4px"][i]}><Label $color="#ececec">{v}</Label></Value>
        <Icon name="lock" ml={4} />
        <Dot />
      </FieldRow>
    ))}
  </FieldBlock>
);

const tabs = ["tool", "-", "renderTab", "outputTab", "layersDim", "sceneDim", "world", "-", "archiveLine", "-", "objectOrange", "wrench", "particles", "physics", "constraint", "meshData", "materialTab", "-", "texture", "-"];

const PropertiesView = () => (
  <Properties>
    <AreaHeader $h={26} $bg="#303030">
      <Group $w={34}><DropIcon name="propsEditor" /></Group>
      <Group $w={124} $ml={62} $bg="#1d1d1d"><Cell $justify="flex-start" $pl={5}><Icon name="search" /></Cell></Group>
      <Push />
      <Group $w={21}><Cell><Icon name="down" size={12} /></Cell></Group>
    </AreaHeader>
    <PropsBody>
      <TabStrip>
        {tabs.map((t, i) => (t === "-" ? <TabGap key={i} /> : <PropTab key={t} $on={t === "objectOrange"}><Icon name={t} /></PropTab>))}
      </TabStrip>
      <Content>
        <Crumb><Icon name="object" /><Label $ml={10}><T>猴头</T></Label><Push /><Icon name="pin" /></Crumb>
        <Group $w={285} $bg="#1d1d1d" $edge="#3c3c3c" $ml={1}>
          <DropIcon name="object" />
          <Cell $seam $justify="flex-start" $pl={8}><Label><T>猴头</T></Label></Cell>
        </Group>
        <Panel $h={305} $mt={11}>
          <PanelHead $h={29}><Icon name="open" size={13} /><Label $ml={4}><T>变换</T></Label><Push /><Icon name="grip" /></PanelHead>
          <XYZ title="位置" values={["3.0793 m", "10.376 m", "2.1547 m"]} mt={6} />
          <XYZ title="旋转" values={["0°", "0°", "0°"]} mt={6} />
          <FieldBlock $mt={6}>
            <FieldRow>
              <Label $w={102} $align="right"><T>模式</T></Label>
              <Value $menu $r="4px"><Label><T>XYZ 欧拉</T></Label><Icon name="down" size={12} /></Value>
              <Dot />
            </FieldRow>
          </FieldBlock>
          <XYZ title="缩放" values={["1.000", "1.000", "1.000"]} mt={5} />
          <FieldBlock $mt={10}>
            <PanelHead $pl={23}><Icon name="right" size={13} /><Label $ml={3}><T>变换增量</T></Label></PanelHead>
          </FieldBlock>
        </Panel>
        {["关系", "集合", "实例化", "运动路径", "可见性", "视图显示", "线条画", "自定义属性"].map((n) => (
          <Panel key={n}>
            <PanelHead><Icon name="right" size={13} /><Label $ml={4}><T>{n}</T></Label><Push /><Icon name="grip" /></PanelHead>
          </Panel>
        ))}
      </Content>
    </PropsBody>
  </Properties>
);

/* ---------- status bar ---------- */

const StatusBar = styled.div`
  flex: 1;
  display: flex;
  align-items: center;
  background: #1d1d1d;
  border-top: 1px solid #161616;
  padding: 1px 9px 0 10px;
`;
const Hint = styled.div`
  display: flex;
  align-items: center;
  width: 212px;
`;

/* ---------- watermark ---------- */

const Watermark = styled.div`
  position: absolute;
  left: 1580px;
  top: 34px;
  display: flex;
  align-items: flex-start;
  opacity: 0.8;
`;
const Author = styled.span`
  font: 700 38px/56px "Noto Sans CJK SC", sans-serif;
  letter-spacing: -0.2px;
  color: #d2d2d2;
  width: 164px;
  margin-top: 11px;
`;

const App = () => (
  <Screen>
    <Global />
    <TitleBar>
      <Icon name="logoColor" size={16} />
      <WindowTitle>Blender</WindowTitle>
      <WindowButtons>
        <Icon name="min" /><Icon name="restore" /><Icon name="close" />
      </WindowButtons>
    </TitleBar>
    <TopBarView />
    <Workspace>
      <Column $w={1584} $gap={4}>
        <ViewportView />
        <TimelineView />
      </Column>
      <Column $w={331} $gap={2}>
        <OutlinerView />
        <PropertiesView />
      </Column>
    </Workspace>
    <StatusBar>
      <Hint><Icon name="mouseL" /><Label $ml={11} $color="#9a9a9a"><T>选择</T></Label></Hint>
      <Hint><Icon name="mouseM" /><Label $ml={11} $color="#9a9a9a"><T>旋转视图</T></Label></Hint>
      <Hint><Icon name="mouseR" /><Label $ml={11} $color="#9a9a9a"><T>物体上下文菜单</T></Label></Hint>
      <Push />
      <Label $color="#9a9a9a">3.5.0</Label>
    </StatusBar>
    <Watermark>
      <Author>KurTips</Author>
      <svg width="146" height="66" viewBox="0 0 146 66" fill="none" stroke="#e0e0e0">
        <g id="bili">
          <path strokeWidth="7.5" d="M5.5 4 L12 60" />
          <path strokeWidth="7" strokeLinejoin="round" d="M12.5 38 C24 37.500 35 42 34 47 C32 53 20 59.500 11.500 59.500Z" />
          <path strokeWidth="6.5" d="M42.5 33 L44.500 59 M51.500 10 L55.500 59 M65 33 L66 59" />
          <path strokeWidth="3.2" d="M38.500 20.500 L39.200 30 M44 20 L44.500 29.500 M61 20.500 L61.400 30 M67 20 L67 29.500" />
        </g>
        <use href="#bili" x="72.5" />
      </svg>
    </Watermark>
  </Screen>
);

export default App;
